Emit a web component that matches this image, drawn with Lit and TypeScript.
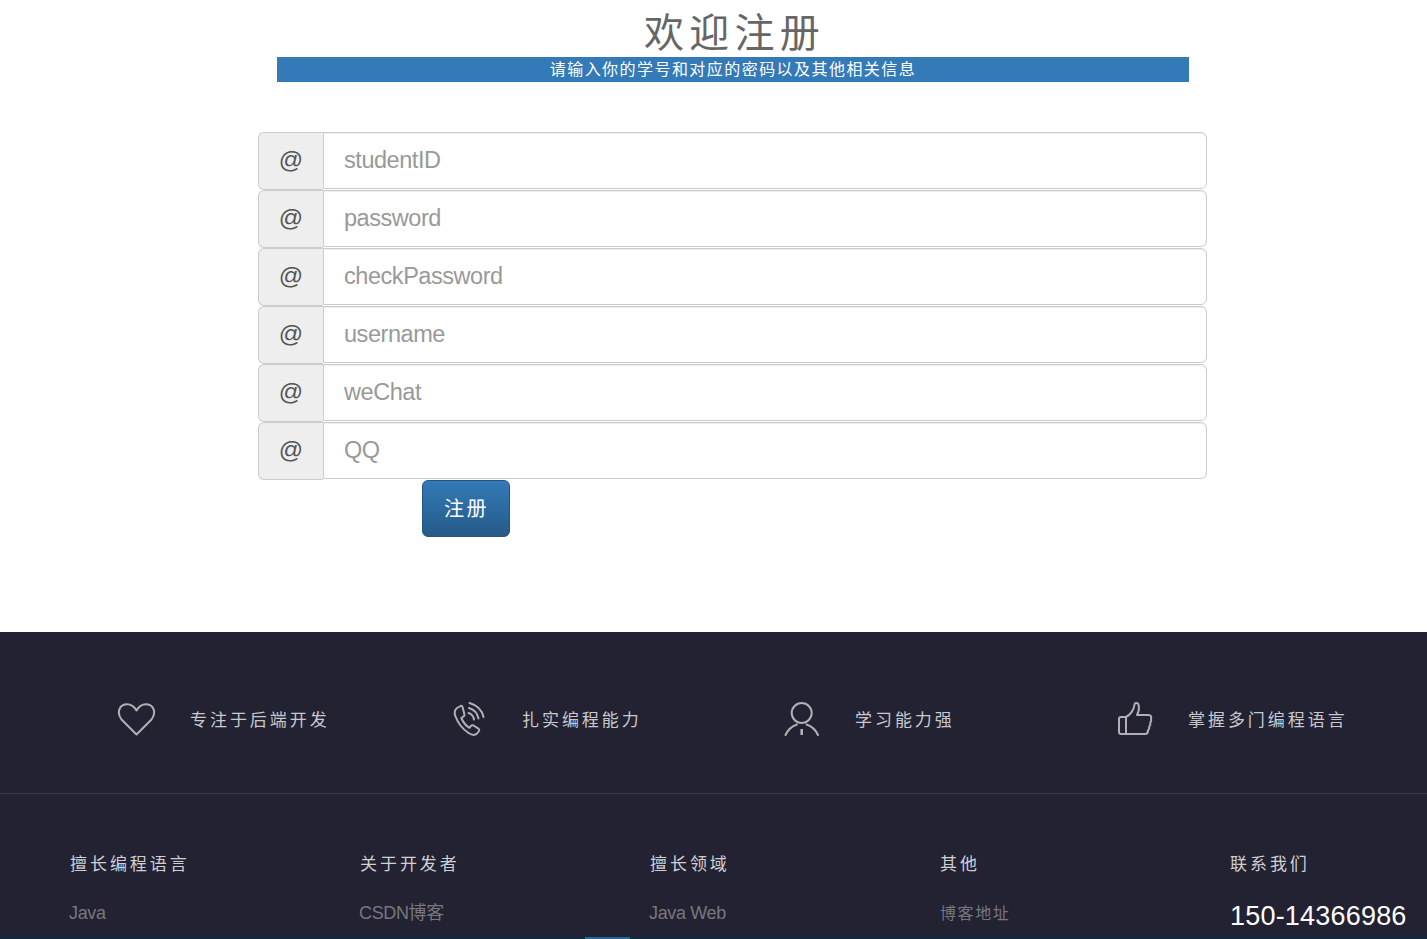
import { LitElement, html, css, svg } from "lit";
import { customElement } from "lit/decorators.js";

const fields = ["studentID", "password", "checkPassword", "username", "weChat", "QQ"];

const icons = {
  heart: svg`<path d="M19.5 34.5 L4.5 19.5 C-0.5 13 2 4.8 9.5 4.3 C13.5 4.1 17.5 7 19.5 10.5 C21.5 7 25.5 4.1 29.5 4.3 C37 4.8 39.5 13 34.5 19.5 Z"/>`,
  phone: svg`<g transform="translate(1.5,0)"><path d="M9 6 L5.5 8 C3 10 2.5 13 4 16.5 C6.5 23 11 29 17 33 C20 35 23.5 35.5 25.5 33.5 L27.5 31 C28 30 27.5 29 26.5 28.3 L22 25.5 C21 25 20 25.3 19.3 26 L18 27.8 C14.5 25.8 11.5 22 9.8 18 L12 16.5 C13 15.8 13.2 14.8 12.8 13.8 L11 7 C10.8 6 10 5.6 9 6 Z"/><path d="M17 13 C20 14 22 16.5 22.5 19.5"/><path d="M17.5 8 C22.5 9.5 26 13.5 27 18.5"/><path d="M18 3 C25 5 30.5 10 32 17" stroke-dasharray="22 2 2 2"/></g>`,
  user: svg`<circle cx="19.7" cy="13" r="10"/><path d="M3.5 35 C6 29.5 10.5 26 15 24.5"/><path d="M36 35 C33.5 29.5 29 26 24.5 24.5"/><path d="M19.7 29 V35" stroke-width="2.6" stroke-linecap="butt"/>`,
  thumb: svg`<path d="M11 17 H6 C5 17 4 18 4 19 V32 C4 33.3 5 34 6 34 H11 Z"/><path d="M11 17 C15 15 19 10 19.5 4.5 C19.7 2.4 23 2.4 23.5 4.5 C24.5 8 23.5 12 22 15 H33.5 C36 15 36.8 17 36 18.5 C36.5 20 36.3 21.5 35.3 22.5 C35.8 24.5 35.3 25.5 34.3 26.5 C34.6 28.5 34 29.5 33 30.5 C33 32.5 32 34 30 34 H11"/>`,
};

const features = [
  { icon: icons.heart, text: "专注于后端开发", cls: "f1" },
  { icon: icons.phone, text: "扎实编程能力", cls: "f2" },
  { icon: icons.user, text: "学习能力强", cls: "f3" },
  { icon: icons.thumb, text: "掌握多门编程语言", cls: "f4" },
];

const cols = [
  { title: "擅长编程语言", item: "Java" },
  { title: "关于开发者", item: "CSDN博客" },
  { title: "擅长领域", item: "Java Web" },
  { title: "其他", item: "博客地址" },
];

@customElement("app-root")
export class AppRoot extends LitElement {
  static styles = css`
    :host { display: block; height: 939px; overflow: hidden; background: #fff; font-family: "Liberation Sans", "Noto Sans CJK SC", sans-serif; }
    .head { display: flex; flex-direction: column; align-items: center; padding-left: 39px; }
    h1 { margin: 0; height: 57px; font: 400 40px/60px "Noto Sans CJK SC", sans-serif; letter-spacing: 5.2px; text-indent: 3px; color: #666; width: 912px; text-align: center; }
    .sub { width: 912px; height: 25px; background: #337ab7; color: #fff; text-align: center; font: 400 16px/22px "Noto Sans CJK SC", sans-serif; letter-spacing: 1.45px; }
    form { width: 949px; margin: 50px 0 0 258px; display: flex; flex-direction: column; }
    .row { display: flex; height: 58px; }
    .addon { width: 65px; box-sizing: border-box; height: 58px; padding-bottom: 2px; background: #eee; border: 1px solid #ccc; border-right: 0; border-radius: 6px 0 0 6px; color: #555; font-size: 24px; display: flex; align-items: center; justify-content: center; }
    .input { flex: 1; height: 57px; box-sizing: border-box; border: 1px solid #ccc; border-radius: 0 6px 6px 0; padding: 0 20px; font-size: 23.5px; line-height: 55px; letter-spacing: -0.45px; color: #999; background: #fff; box-shadow: inset 0 1px 1px rgba(0,0,0,.075); }
    .btn { margin-left: 164px; width: 88px; height: 57px; box-sizing: border-box; border: 1px solid #245580; border-radius: 6px; background: linear-gradient(#337ab7, #265a88); color: #fff; font: 400 20px/53px "Noto Sans CJK SC", sans-serif; letter-spacing: 2.4px; text-indent: 1px; text-align: center; }
    footer { position: absolute; left: 0; right: 0; top: 632px; height: 307px; background: #222232; }
    .features { height: 161px; border-bottom: 1px solid #3a3a49; display: grid; grid-template-columns: 333px 332px 333px 1fr; padding-left: 117px; }
    .feat { display: flex; align-items: center; height: 175px; }
    .feat svg { width: 39px; height: 39px; fill: none; stroke: #b0b0b6; stroke-width: 2; flex: none; stroke-linejoin: round; stroke-linecap: round; }
    .feat span { margin: 0 0 2px 34px; color: #c9c9cd; font: 400 17px/24px "Noto Sans CJK SC", sans-serif; letter-spacing: 2.95px; white-space: nowrap; }
    .feat.f2 span { margin-left: 33px; }
    .links { display: grid; grid-template-columns: 290px 290px 290px 290px 1fr; padding: 56px 0 0 70px; }
    .col h3 { margin: 0; font: 400 17px/26px "Noto Sans CJK SC", sans-serif; color: #d0d0d3; letter-spacing: 2.95px; white-space: nowrap; }
    .col p { margin: 24px 0 0 -1px; font-size: 18px; line-height: 26px; color: #77777f; letter-spacing: -0.35px; white-space: nowrap; }
    .col p.cn { margin: 23px 0 0 0; font-family: "Noto Sans CJK SC", sans-serif; font-size: 16px; letter-spacing: 1.6px; }
    .col p.tel { margin: 24px 0 0 0; font-size: 27px; line-height: 32px; color: #fff; letter-spacing: 0.2px; }
    .strip { position: absolute; left: 0; right: 0; bottom: 0; height: 2px; background: #0f2a3c; }
    .strip i { position: absolute; left: 585px; width: 45px; height: 2px; background: #2a6496; }
  `;

  render() {
    return html`
      <div class="head">
        <h1>欢迎注册</h1>
        <div class="sub">请输入你的学号和对应的密码以及其他相关信息</div>
      </div>
      <form>
        ${fields.map(
          (f) => html`<div class="row"><div class="addon">@</div><div class="input">${f}</div></div>`
        )}
        <div class="btn">注册</div>
      </form>
      <footer>
        <div class="features">
          ${features.map(
            (f) => html`<div class="feat ${f.cls}"><svg viewBox="0 0 39 39">${f.icon}</svg><span>${f.text}</span></div>`
          )}
        </div>
        <div class="links">
          ${cols.map(
            (c, i) => html`<div class="col"><h3>${c.title}</h3><p class=${i === 3 ? "cn" : ""}>${c.item}</p></div>`
          )}
          <div class="col"><h3>联系我们</h3><p class="tel">150-14366986</p></div>
        </div>
        <div class="strip"><i></i></div>
      </footer>
    `;
  }
}
